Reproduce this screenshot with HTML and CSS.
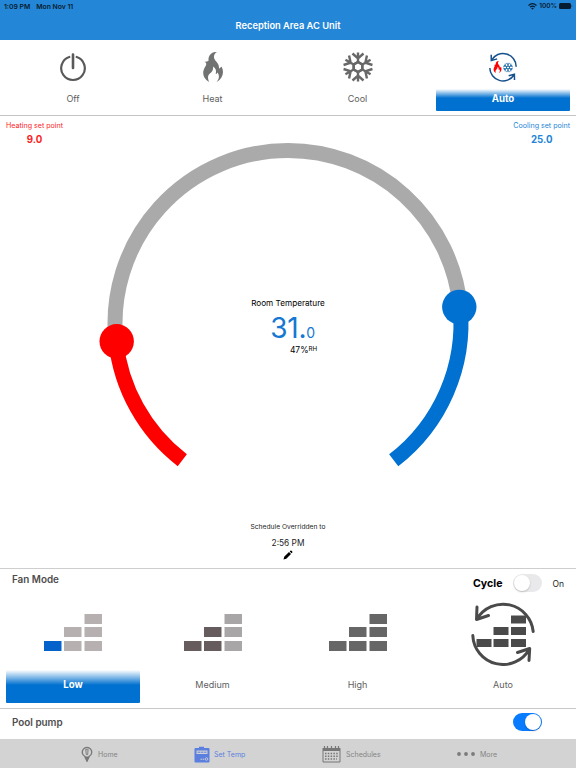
FILE: index.html
```html
<!DOCTYPE html>
<html lang="en">
<head>
<meta charset="utf-8">
<title>Reception Area AC Unit</title>
<link rel="stylesheet" href="styles.css">
</head>
<body>
<svg class="defs" aria-hidden="true">
  <symbol id="flame" viewBox="0 0 20 30"><path fill-rule="evenodd" d="M14 0C9-.5 5 3 5.500 9C4.500 9.200 2.600 9.800 1.500 9.700C4 11 3.500 12.500 2 15C-1 20-.6 26 6 30C4.500 26 4.500 23 7.500 21C9.500 19.500 10.500 17 10 14.500C14 17 13 20 12.700 22C13.500 22 14.200 21.300 14.600 20.500C16.800 24 16 27 13.700 30C20 26.500 21.500 20 18.500 14.500C17 16 16.500 16.500 16 16.500C16.500 10 10.500 9 11 4.500C11.200 2.500 12 1 14 0Z"/></symbol>
  <symbol id="snow" viewBox="-15 -15 30 30">
    <g id="arm"><path d="M0-14.500V-5M-5.500-13.500L0-8.500L5.500-13.500M-4.300-2.500L0-5L4.300-2.500"/></g>
    <use href="#arm" transform="rotate(60)"/><use href="#arm" transform="rotate(120)"/><use href="#arm" transform="rotate(180)"/><use href="#arm" transform="rotate(240)"/><use href="#arm" transform="rotate(300)"/>
  </symbol>
</svg>

<header class="top">
  <div class="status">
    <span class="clock">1:09 PM</span><span>Mon Nov 11</span>
    <svg class="wifi" width="9" height="7" viewBox="0 0 9 7"><path d="M.5 2.500Q4.500-1.100 8.500 2.500M2 4.100Q4.500 2 7 4.100" fill="none" stroke="#061c30" stroke-width="1.200"/><path d="M3.100 5.100Q4.500 4.200 5.900 5.100L4.500 6.700Z"/></svg>
    <span class="percent">100%</span>
    <svg class="battery" width="14" height="6" viewBox="0 0 14 6"><rect width="12" height="6" rx="1.500"/><path d="M12.700 2Q14 3 12.700 4Z"/></svg>
  </div>
  <h1>Reception Area AC Unit</h1>
</header>

<nav class="modes">
  <div class="mode"><div class="pic"><svg width="28" height="30" viewBox="0 0 28 30"><path d="M10.300 5A11.800 11.800 0 1 0 17.700 5" fill="none" stroke="#595959" stroke-width="2.200" stroke-linecap="round"/><path d="M14 2.500V16" stroke="#595959" stroke-width="2.600" stroke-linecap="round"/></svg></div><span class="label">Off</span></div>
  <div class="mode"><div class="pic"><svg class="flame" width="20" height="30"><use href="#flame"/></svg></div><span class="label">Heat</span></div>
  <div class="mode"><div class="pic"><svg class="snow" width="30" height="30"><use href="#snow"/></svg></div><span class="label">Cool</span></div>
  <div class="mode selected"><div class="pic"><svg width="30" height="30" viewBox="0 0 30 30">
    <path d="M3.500 8.200A13.200 13.200 0 0 1 28.200 14.800M26 23A13.200 13.200 0 0 1 1.800 16M3.200 2.800L3.300 8.600L9.200 6.900M26.500 28L26.400 22.200L20.700 23.700" fill="none" stroke="#16518e" stroke-width="1.500"/>
    <use class="red" href="#flame" x="5" y="9" width="9" height="12"/><use class="blue-snow" href="#snow" x="15" y="10.500" width="10" height="10"/></svg></div><span class="label">Auto</span></div>
</nav>

<main class="thermostat">
  <svg class="dial" width="576" height="452" viewBox="0 116 576 452">
    <g fill="none" stroke-width="15">
      <path d="M115.900 341A173 173 0 0 1 288 150.500A173 173 0 0 1 460.200 307" stroke="#aaa"/>
      <path d="M115.900 341A173 173 0 0 0 182.300 460.300" stroke="#f00"/>
      <path d="M460.200 307A173 173 0 0 1 393.700 460.300" stroke="#0071d0"/>
    </g>
    <circle cx="116.700" cy="341.300" r="17.200" fill="#f00"/>
    <circle cx="459.300" cy="307" r="17.200" fill="#0071d0"/>
  </svg>
  <div class="readings">
    <div class="setpoints">
      <div class="setpoint heat">Heating set point<b>9.0</b></div>
      <div class="setpoint cool">Cooling set point<b>25.0</b></div>
    </div>
    <div class="room">Room Temperature</div>
    <div class="temperature">31.<small>0</small></div>
    <div class="humidity">47%<small>RH</small></div>
    <div class="override">Schedule Overridden to</div>
    <div class="until">2:56 PM</div>
    <svg class="pencil" width="10" height="10" viewBox="0 0 10 10"><path d="M.5 9.500L1.200 6.700L6 2L8 4L3.300 8.800ZM6.700 1.400L7.400.7Q8 .2 8.600.8L9.200 1.400Q9.800 2 9.300 2.600L8.600 3.300Z"/></svg>
  </div>
</main>

<section class="fan">
  <div class="fan-head"><h2>Fan Mode</h2><div class="cycle"><b>Cycle</b><span class="switch"></span><span class="state">On</span></div></div>
  <div class="fan-modes">
    <div class="mode selected"><div class="pic"><svg width="58" height="38" viewBox="0 0 58 38"><g fill="#b7b0b0"><path d="M40.500 0h17.500v10h-17.500ZM20 13h17.500v10h-17.500ZM40.500 13h17.500v10h-17.500ZM20 27h17.500v10h-17.500ZM40.500 27h17.500v10h-17.500Z"/></g><path fill="#0562cb" d="M0 27h17.500v10h-17.500Z"/></svg></div><span class="label">Low</span></div>
    <div class="mode"><div class="pic"><svg width="58" height="38" viewBox="0 0 58 38"><path fill="#a9a6a7" d="M40.500 0h17.500v10h-17.500ZM40.500 13h17.500v10h-17.500ZM40.500 27h17.500v10h-17.500Z"/><path fill="#665c5e" d="M0 27h17.500v10h-17.500ZM20 13h17.500v10h-17.500ZM20 27h17.500v10h-17.500Z"/></svg></div><span class="label">Medium</span></div>
    <div class="mode"><div class="pic"><svg width="58" height="38" viewBox="0 0 58 38"><path fill="#666" d="M0 27h17.500v10h-17.500ZM20 13h17.500v10h-17.500ZM20 27h17.500v10h-17.500ZM40.500 0h17.500v10h-17.500ZM40.500 13h17.500v10h-17.500ZM40.500 27h17.500v10h-17.500Z"/></svg></div><span class="label">High</span></div>
    <div class="mode"><div class="pic"><svg width="66" height="66" viewBox="0 0 66 66"><g fill="none" stroke="#4a4a4b" stroke-width="3" stroke-linecap="round" stroke-linejoin="round"><path d="M7 19A30.300 30.300 0 0 1 63.200 31.500M59.500 49A30.300 30.300 0 0 1 2.800 35.500M7 7L6.500 19.500L18.500 15.500M59 60.500L59.700 48.500L47.500 52.500"/></g><path fill="#4a4a4b" d="M6.500 39h15v8h-15ZM23.500 27h15v8h-15ZM23.500 39h15v8h-15ZM41 15.500h15v8h-15ZM41 27h15v8h-15ZM41 39h15v8h-15Z"/></svg></div><span class="label">Auto</span></div>
  </div>
</section>

<section class="pump"><h2>Pool pump</h2><span class="switch on"></span></section>

<footer class="tabs">
  <div class="tab"><svg width="12" height="16" viewBox="0 0 12 16"><path d="M6 15.200L3.700 10.300A4.700 4.700 0 1 1 8.300 10.300Z" fill="none" stroke="#777" stroke-width="1.300"/><path d="M3.500 10.500H8.500L6 15.500Z" fill="#777"/><path d="M4.500 3.500H7.300L6.700 8.500H5.200ZM6 3.500V9" fill="none" stroke="#777" stroke-width=".7"/></svg>Home</div>
  <div class="tab active"><svg width="16" height="17" viewBox="0 0 16 17"><path fill="#5b7fdf" d="M5 2V.7H10V2H14.500Q15.500 2 15.500 3V15.500Q15.500 16.500 14.500 16.500H1.500Q.5 16.500.5 15.500V3Q.5 2 1.500 2Z"/><path fill="#d3d3d3" d="M2.500 4.500H13.500V8H2.500Z"/><path stroke="#5b7fdf" d="M3.500 6.200H6.500M7.200 6.200H9.500M10.200 6.200H12.500"/><path stroke="#d3d3d3" d="M6.500 13.200H8.100M8.700 13.200H10.200"/><circle cx="12.500" cy="13" r="1.300" fill="none" stroke="#d3d3d3" stroke-width=".8"/></svg>Set Temp</div>
  <div class="tab"><svg width="19" height="17" viewBox="0 0 19 17"><path d="M.5 2H18.500V5H.5Z" fill="#777"/><path d="M2.500 0V3M5.500 0V3M9.500 0V3M13.500 0V3M16.500 0V3" stroke="#777" stroke-width="1.200"/><path d="M1 5V16H18V5" fill="none" stroke="#777"/><path d="M3 7.500H17M3 10.200H17M3 13H15" fill="none" stroke="#777" stroke-width="1.500" stroke-dasharray="1.500 1.300"/></svg>Schedules</div>
  <div class="tab"><svg width="18" height="4" viewBox="0 0 18 4" fill="#7b7b7b"><circle cx="2" cy="2" r="1.900"/><circle cx="9" cy="2" r="1.900"/><circle cx="16" cy="2" r="1.900"/></svg>More</div>
</footer>
</body>
</html>
```
FILE: styles.css
```css
* { box-sizing: border-box; }
body { margin: 0; width: 576px; height: 768px; overflow: hidden; background: #fff; font-family: Inter, "Liberation Sans", sans-serif; color: #222; }
svg { display: block; flex: none; }
.defs { position: absolute; width: 0; height: 0; }
h1, h2 { margin: 0; }

.top { height: 40px; background: #2486d6; }
.status { display: flex; align-items: center; height: 12px; padding: 0 3px 0 4px; font-size: 6.800px; font-weight: 600; color: #061c30; fill: #061c30; }
.clock { margin-right: 6px; }
.wifi { margin-left: auto; }
.percent { margin: 0 2px 0 2px; font-size: 6.500px; }
h1 { height: 28px; line-height: 28px; text-align: center; color: #fff; font-size: 9.300px; font-weight: 600; }

.modes { height: 76px; padding: 0 6px; border-bottom: 1px solid #c4c4c4; }
.modes, .fan-modes { display: grid; grid-template-columns: 139.5px 145px 145.5px 134px; }
.mode { width: 134px; display: flex; flex-direction: column; text-align: center; }
.pic { display: flex; align-items: center; justify-content: center; }
.modes .pic { height: 49px; padding-top: 5px; }
.label { color: #606060; font-size: 9px; border-radius: 1px; }
.modes .label { height: 22px; line-height: 20px; }
.selected .label { color: #fff; font-weight: 700; font-size: 9.700px; }
.modes .selected .label { background: linear-gradient(#fff, #0071d0 9px); }
.flame { fill: #707372; }
.snow { fill: none; stroke: #686868; stroke-width: 2.400; }
.red { fill: #f00; }
.blue-snow { fill: none; stroke: #2670ae; stroke-width: 2.700; }

.thermostat { display: grid; height: 452px; }
.dial, .readings { grid-area: 1 / 1; }
.readings { display: flex; flex-direction: column; align-items: center; }
.setpoints { width: 100%; display: flex; justify-content: space-between; padding: 5px 6px 0; height: 181px; }
.setpoint { text-align: center; font-size: 7.100px; line-height: 10px; }
.setpoint b { display: block; font-size: 9.700px; font-weight: 700; line-height: 17px; }
.heat { color: #fa2525; }
.cool { color: #2486d6; }
.room { font-size: 8.200px; line-height: 12px; color: #000; }
.temperature { height: 36px; line-height: 38px; font-size: 28px; color: #1478d2; padding-left: 9px; letter-spacing: -.3px; }
.temperature small { font-size: 14px; }
.humidity { height: 10px; line-height: 10px; padding-left: 31px; font-size: 8.500px; display: flex; color: #000; }
.humidity small { font-size: 6.200px; line-height: 8px; }
.override { margin-top: 167px; font-size: 6.700px; line-height: 10px; }
.until { margin-top: 5px; font-size: 8.300px; line-height: 12px; }
.pencil { margin-top: 1px; fill: #000; }

.fan { height: 140px; border-top: 1px solid #cecece; }
.fan-head { display: flex; justify-content: space-between; height: 32px; padding: 0 12px; }
h2 { font-size: 9.900px; font-weight: 600; line-height: 21px; color: #4d4d4d; }
.cycle { display: flex; align-items: center; padding-bottom: 5px; }
.cycle b { font-size: 10.600px; font-weight: 700; margin-right: 11px; padding-top: 2px; color: #000; }
.state { margin-left: 10px; font-size: 8.500px; padding-top: 2px; }
.switch { display: flex; width: 29px; height: 18px; border-radius: 9px; padding: 1px; background: #e9e9eb; }
.switch::before { content: ""; width: 16px; height: 16px; border-radius: 50%; background: #fff; box-shadow: 0 1px 2px #0003; }
.switch.on { background: #087bff; justify-content: flex-end; }
.fan-modes { padding: 0 6px; }
.fan-modes .pic { height: 69px; padding-bottom: 6px; }
.fan-modes .label { height: 33px; line-height: 29px; }
.fan-modes .selected .label { background: linear-gradient(#fff, #0071d0 15px); }

.pump { height: 31px; border-top: 1px solid #c8c8c8; display: flex; justify-content: space-between; padding: 4px 34px 0 12px; }
.pump h2 { line-height: 19px; }
.tabs { height: 29px; background: #d3d3d3; display: grid; grid-template-columns: 113px 128px 135px 60px; padding-left: 81px; }
.tab { display: flex; align-items: center; gap: 5px; font-size: 7px; color: #848484; padding-top: 1px; }
.tab.active { color: #5b7fdf; gap: 4px; }
```
